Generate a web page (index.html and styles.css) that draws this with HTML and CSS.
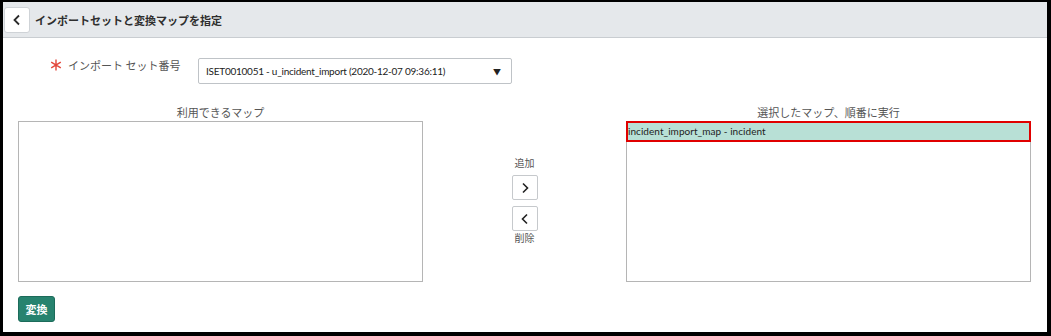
FILE: index.html
```html
<!DOCTYPE html>
<html lang="ja">
<head>
  <meta charset="UTF-8" />
  <title>インポートセットと変換マップを指定</title>
  <link rel="stylesheet" href="styles.css">
</head>
<body>
  <div class="frame">
    <header class="topbar">
      <button class="back-btn" aria-label="戻る">
        <svg width="10" height="12" viewBox="0 0 10 12"><path d="M7 1.5 L2.5 6 L7 10.5" fill="none" stroke="#2b2b2b" stroke-width="1.8"/></svg>
      </button>
      <h1>インポートセットと変換マップを指定</h1>
    </header>

    <div class="form-row">
      <label class="field-label">
        <svg class="req" width="12" height="12" viewBox="0 0 12 12"><path d="M6 0.5 V11.5 M1.2 3.2 L10.8 8.8 M1.2 8.8 L10.8 3.2" stroke="#e3463a" stroke-width="1.4" fill="none"/></svg>インポート セット番号
      </label>
      <div class="select-box">
        <span class="select-text">ISET0010051 - u_incident_import (2020-12-07 09:36:11)</span>
        <span class="caret">▼</span>
      </div>
    </div>

    <div class="bucket">
      <div class="bucket-col">
        <div class="bucket-title">利用できるマップ</div>
        <div class="bucket-list"></div>
      </div>

      <div class="bucket-mid">
        <div class="mid-label">追加</div>
        <button class="arrow-btn">
          <svg width="10" height="12" viewBox="0 0 10 12"><path d="M3 1.5 L7.5 6 L3 10.5" fill="none" stroke="#222" stroke-width="1.6"/></svg>
        </button>
        <button class="arrow-btn">
          <svg width="10" height="12" viewBox="0 0 10 12"><path d="M7 1.5 L2.5 6 L7 10.5" fill="none" stroke="#222" stroke-width="1.6"/></svg>
        </button>
        <div class="mid-label">削除</div>
      </div>

      <div class="bucket-col">
        <div class="bucket-title">選択したマップ、順番に実行</div>
        <div class="bucket-list">
          <div class="bucket-item selected">incident_import_map - incident</div>
        </div>
      </div>
    </div>

    <div class="actions">
      <button class="primary-btn">変換</button>
    </div>
  </div>
</body>
</html>
```

FILE: styles.css
```css
html, body {
  margin: 0;
  padding: 0;
  background: #000;
}

body {
  font-family: 'Lato', 'Noto Sans CJK JP', sans-serif;
  color: #333;
  font-size: 11px;
}

.frame {
  box-sizing: border-box;
  width: 1051px;
  height: 336px;
  border-style: solid;
  border-color: #000;
  border-width: 2px 4px 4px 3px;
  background: #fff;
  display: flex;
  flex-direction: column;
}

.topbar {
  height: 35px;
  background: #e5e8eb;
  border-bottom: 1px solid #c9cdd1;
  display: flex;
  align-items: center;
  padding-left: 1px;
}

.back-btn {
  width: 26px;
  height: 26px;
  background: #fff;
  border: 1px solid #cfd3d7;
  border-radius: 3px;
  display: flex;
  align-items: center;
  justify-content: center;
  padding: 0;
  margin-right: 5px;
}

.topbar h1 {
  margin: 0;
  font-size: 11px;
  font-weight: 700;
  color: #2e2e2e;
  font-family: 'Noto Sans CJK JP', sans-serif;
}

.form-row {
  display: flex;
  align-items: flex-start;
  margin-top: 20px;
  padding-left: 47px;
}

.field-label {
  width: 148px;
  font-family: 'Noto Sans CJK JP', sans-serif;
  font-size: 11px;
  color: #555;
  line-height: 14px;
  display: flex;
  align-items: center;
}

.req {
  margin-right: 6px;
}

.select-box {
  box-sizing: border-box;
  width: 314px;
  height: 26px;
  border: 1px solid #bfc3c7;
  border-radius: 2px;
  display: flex;
  align-items: center;
  justify-content: space-between;
  padding: 0 10px 0 7px;
  color: #222;
}

.select-text {
  font-size: 10px;
  letter-spacing: -0.25px;
}

.caret {
  font-size: 8px;
  color: #222;
}

.bucket {
  display: flex;
  padding: 0 16px 0 15px;
  margin-top: 21px;
}

.bucket-col {
  width: 405px;
  display: flex;
  flex-direction: column;
}

.bucket-title {
  text-align: center;
  font-family: 'Noto Sans CJK JP', sans-serif;
  color: #555;
  font-size: 11px;
  line-height: 14px;
  margin-bottom: 2px;
}

.bucket-list {
  box-sizing: border-box;
  height: 161px;
  border: 1px solid #b5b5b5;
  background: #fff;
}

.bucket-item {
  height: 19px;
  line-height: 19px;
  font-size: 10px;
  letter-spacing: 0.05px;
  color: #222;
  padding-left: 1px;
}

.bucket-item.selected {
  background: #b8e0d6;
  outline: 2px solid #e00000;
  outline-offset: -1px;
}

.bucket-mid {
  flex: 1;
  display: flex;
  flex-direction: column;
  align-items: center;
  padding-top: 51px;
}

.mid-label {
  font-family: 'Noto Sans CJK JP', sans-serif;
  font-size: 10px;
  color: #555;
  line-height: 14px;
}

.arrow-btn {
  width: 26px;
  height: 25px;
  margin-top: 5px;
  background: #fff;
  border: 1px solid #c6c9cc;
  border-radius: 2px;
  display: flex;
  align-items: center;
  justify-content: center;
  padding: 0;
}

.arrow-btn + .arrow-btn {
  margin-top: 6px;
}

.actions {
  padding-left: 15px;
  margin-top: 14px;
}

.primary-btn {
  width: 37px;
  height: 26px;
  background: #27836f;
  border: 1px solid #1c6b5a;
  border-radius: 3px;
  color: #fff;
  font-family: 'Noto Sans CJK JP', sans-serif;
  font-size: 11px;
  font-weight: 700;
  padding: 0;
}
```
